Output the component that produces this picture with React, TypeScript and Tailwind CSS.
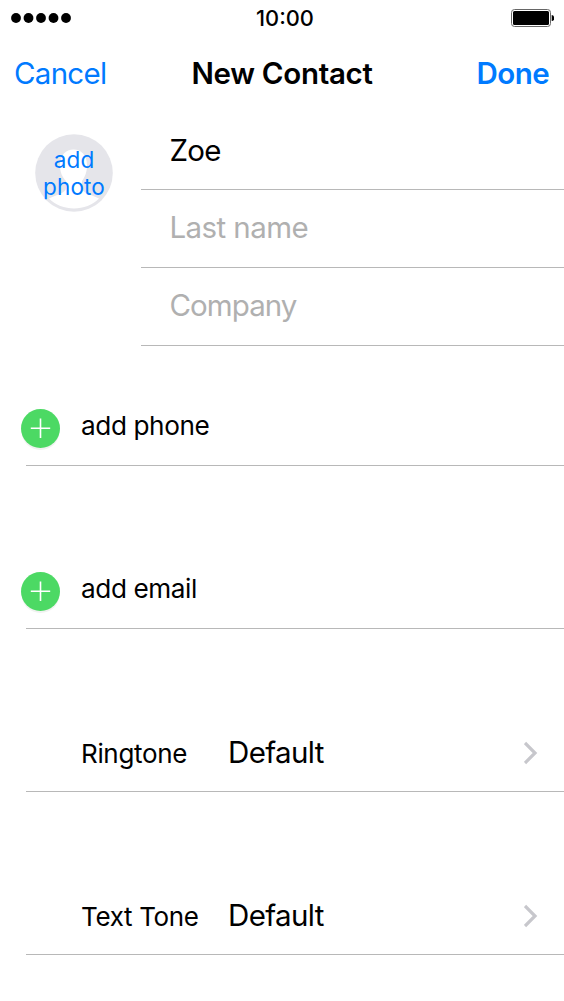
import type { ReactNode } from 'react';

function AddButton() {
  return (
    <svg className="ml-[21px] h-[43px] w-[39px] shrink-0" viewBox="0 0 39 43">
      <circle cx="19.5" cy="22" r="19" fill="#f0f2f0" />
      <circle cx="19.5" cy="19.5" r="19.5" fill="#4cd964" />
      <path d="M19.5 9.5v19.5M9.8 19.3h19.4" stroke="#fff" strokeWidth="1.6" />
    </svg>
  );
}

function AddRow({ label }: { label: string }) {
  return (
    <div className="relative flex h-[76px] items-start pt-[19px]">
      <AddButton />
      <span className="ml-[21px] pt-px text-[26.2px] leading-8 tracking-[-0.016em]">{label}</span>
      <div className="absolute right-0 bottom-0 left-[26px] h-px bg-[#b8b8b8]" />
    </div>
  );
}

function ToneRow({ label, value }: { label: string; value: string }) {
  return (
    <div className="relative flex h-[78px] items-center pr-[26px] pl-[81px]">
      <span className="w-[147px] pt-[2px] text-[26px] leading-8 tracking-[-0.013em]">{label}</span>
      <span className="-mt-[2px] text-[29.5px] leading-8 tracking-[-0.021em]">{value}</span>
      <svg className="-mt-px ml-auto h-6 w-[14px]" viewBox="0 0 14 24" fill="none">
        <path d="M1 2l10 10-10 10" stroke="#c7c7cc" strokeWidth="3.2" />
      </svg>
      <div className="absolute right-0 bottom-0 left-[26px] h-px bg-[#b8b8b8]" />
    </div>
  );
}

function Field({ children }: { children: ReactNode }) {
  return (
    <div className="flex h-[78px] items-center border-b border-[#b8b8b8] pb-px pl-[28.5px] text-[29.5px] tracking-[-0.024em]">
      {children}
    </div>
  );
}

export default function App() {
  return (
    <div className="h-[1001px] w-[564px] overflow-hidden bg-white font-['Inter',sans-serif] text-black">
      <div className="grid h-9 grid-cols-[1fr_auto_1fr] items-center pr-[10px] pl-[11px]">
        <svg width="60" height="10" viewBox="0 0 60 10">
          {[5, 17.5, 30, 42.5, 55].map((x) => (
            <circle key={x} cx={x} cy="5" r="4.9" />
          ))}
        </svg>
        <span className="pt-px pl-[5px] text-[21.8px] font-medium">10:00</span>
        <svg className="ml-auto" width="43" height="18" viewBox="0 0 43 18">
          <rect x=".5" y=".5" width="39" height="17" rx="3" fill="none" stroke="#666" />
          <rect x="2" y="2" width="36" height="14" rx="1.5" />
          <path d="M40.7 6q2.5 0 2.5 3t-2.5 3z" />
        </svg>
      </div>
      <div className="grid h-[76px] grid-cols-[1fr_auto_1fr] items-center px-[15px] pb-px text-[29.5px]">
        <button className="-ml-px text-left tracking-[-0.025em] text-[#007aff]">Cancel</button>
        <h1 className="font-semibold tracking-[-0.01em]">New Contact</h1>
        <button className="text-right font-semibold tracking-[-0.02em] text-[#007aff]">Done</button>
      </div>
      <div className="flex">
        <div className="w-[141px] shrink-0 pt-[22px] pl-[35px]">
          <button className="relative h-[78px] w-[78px] text-[22.5px] leading-[27px] text-[#007aff]">
            <svg className="absolute inset-0" viewBox="0 0 78 78">
              <circle cx="39" cy="39" r="38.8" fill="#e5e5ea" />
              <path
                d="M25 31C25 21 31 15.500 38.500 15.500S52 21 52 31c0 7-2 12-5 16v7c0 5 8 6 17 10.500C58 71 48 74.500 39 74.500S20 71 14 64.500C23 60 31 59 31 54v-7c-4-4-6-9-6-16z"
                fill="#fff"
              />
            </svg>
            <span className="relative -mx-2 block tracking-[0.006em]">add<br />photo</span>
          </button>
        </div>
        <div className="flex-1">
          <Field>Zoe</Field>
          <Field><span className="-mt-[2px] tracking-[-0.02em] text-[#b0b0b0]">Last name</span></Field>
          <Field><span className="-mt-[2px] tracking-[-0.032em] text-[#b0b0b0]">Company</span></Field>
        </div>
      </div>
      <div className="mt-11"><AddRow label="add phone" /></div>
      <div className="mt-[87px]"><AddRow label="add email" /></div>
      <div className="mt-[85px]"><ToneRow label="Ringtone" value="Default" /></div>
      <div className="mt-[85px]"><ToneRow label="Text Tone" value="Default" /></div>
    </div>
  );
}
